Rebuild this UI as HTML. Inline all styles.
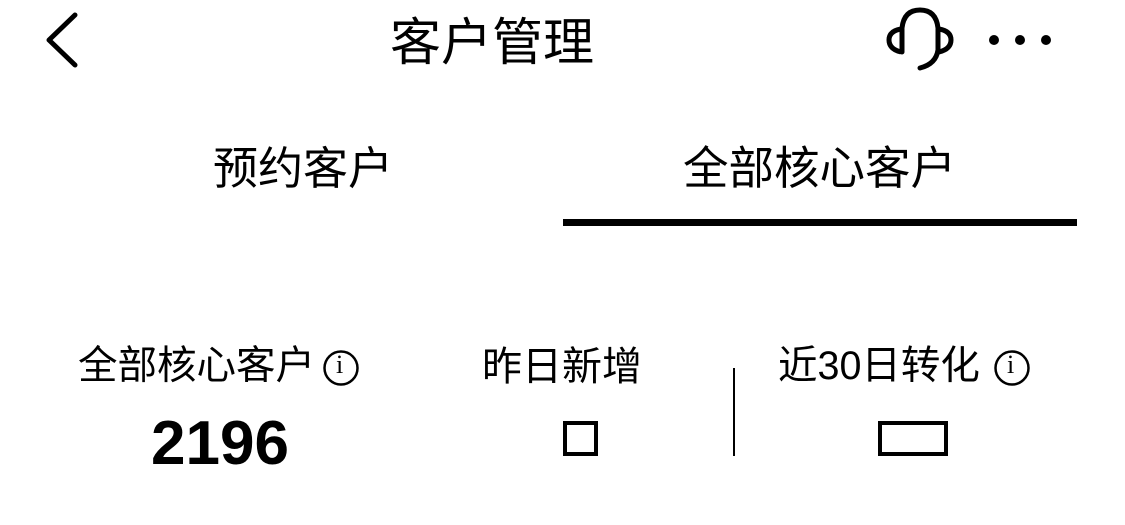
<!DOCTYPE html>
<html><head><meta charset="utf-8"><style>
html,body{margin:0;padding:0;background:#fff;}
body{width:1125px;height:525px;position:relative;overflow:hidden;font-family:"Liberation Sans","Noto Sans CJK SC",sans-serif;color:#000;}
.a{position:absolute;white-space:nowrap;line-height:1;}
</style></head><body>
<svg class="a" style="left:0;top:0" width="1125" height="525">
<polyline points="75,15 49,40 75,65" fill="none" stroke="#000" stroke-width="5" stroke-linecap="round" stroke-linejoin="round"/>
<path d="M902,52 V28 Q904,10 920,10 Q936,10 938,28 V50 Q936,64 920,68" fill="none" stroke="#000" stroke-width="5" stroke-linecap="round"/>
<path d="M901,29 Q889,31 889,40 Q889,49 901,52" fill="none" stroke="#000" stroke-width="5"/>
<path d="M939,29 Q951,31 951,40 Q951,49 939,52" fill="none" stroke="#000" stroke-width="5"/>
<circle cx="994" cy="40" r="5"/><circle cx="1020" cy="40" r="5"/><circle cx="1046" cy="40" r="5"/>
<rect x="563" y="219" width="514" height="7"/>
<circle cx="341" cy="368" r="16.5" fill="none" stroke="#000" stroke-width="2.5"/>
<circle cx="1012" cy="368" r="16.5" fill="none" stroke="#000" stroke-width="2.5"/>
<rect x="733" y="368" width="2" height="88"/>
<rect x="565" y="423" width="31" height="31" fill="none" stroke="#000" stroke-width="4"/>
<rect x="880" y="423" width="66" height="31" fill="none" stroke="#000" stroke-width="4"/>
</svg>
<div class="a" style="left:336px;top:352px;font-size:26px;font-family:'Liberation Serif',serif;">i</div>
<div class="a" style="left:1007px;top:352px;font-size:26px;font-family:'Liberation Serif',serif;">i</div>
<div class="a" style="left:390px;top:17px;font-size:51px;">客户管理</div>
<div class="a" style="left:213px;top:146px;font-size:45px;">预约客户</div>
<div class="a" style="left:683px;top:146px;font-size:45.5px;">全部核心客户</div>
<div class="a" style="left:78px;top:347px;font-size:39.5px;">全部核心客户</div>
<div class="a" style="left:482px;top:347px;font-size:40px;">昨日新增</div>
<div class="a" style="left:778px;top:347px;font-size:39.5px;">近30日转化</div>
<div class="a" style="left:151px;top:413px;font-size:62px;font-weight:bold;">2196</div>
</body></html>
